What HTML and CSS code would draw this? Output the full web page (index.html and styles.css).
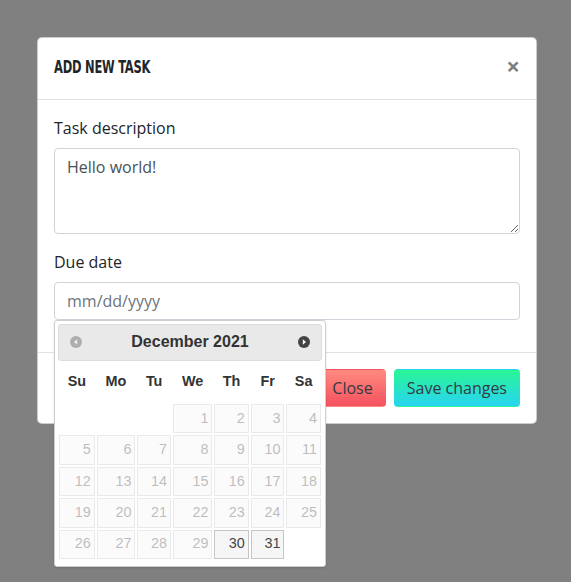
FILE: index.html
```html
<!DOCTYPE html>
<html lang="en">
<head>
<meta charset="utf-8">
<title>Add new task</title>
<link rel="stylesheet" href="styles.css">
</head>
<body>
<div class="backdrop">
  <div class="modal">
    <div class="modal-header">
      <h5 class="modal-title">Add new task</h5>
      <span class="close">&times;</span>
    </div>
    <div class="modal-body">
      <div class="form-group">
        <label class="label">Task description</label>
        <textarea class="control textarea" rows="3">Hello world!</textarea>
      </div>
      <div class="form-group">
        <label class="label">Due date</label>
        <div class="date-wrap">
          <input class="control" type="text" placeholder="mm/dd/yyyy">
          <div class="datepicker">
            <div class="dp-header">
              <span class="dp-nav dp-prev disabled">
                <svg width="12" height="12" viewBox="0 0 12 12"><circle cx="6" cy="6" r="6" fill="#444"/><path d="M7.2 3.2 L4 6 L7.2 8.8 Z" fill="#fff"/></svg>
              </span>
              <div class="dp-title">December 2021</div>
              <span class="dp-nav dp-next">
                <svg width="12" height="12" viewBox="0 0 12 12"><circle cx="6" cy="6" r="6" fill="#444"/><path d="M4.8 3.2 L8 6 L4.8 8.8 Z" fill="#fff"/></svg>
              </span>
            </div>
            <table class="dp-table">
              <thead>
                <tr><th>Su</th><th>Mo</th><th>Tu</th><th>We</th><th>Th</th><th>Fr</th><th>Sa</th></tr>
              </thead>
              <tbody>
                <tr><td class="empty">&nbsp;</td><td class="empty">&nbsp;</td><td class="empty">&nbsp;</td><td class="off"><span class="day">1</span></td><td class="off"><span class="day">2</span></td><td class="off"><span class="day">3</span></td><td class="off"><span class="day">4</span></td></tr>
                <tr><td class="off"><span class="day">5</span></td><td class="off"><span class="day">6</span></td><td class="off"><span class="day">7</span></td><td class="off"><span class="day">8</span></td><td class="off"><span class="day">9</span></td><td class="off"><span class="day">10</span></td><td class="off"><span class="day">11</span></td></tr>
                <tr><td class="off"><span class="day">12</span></td><td class="off"><span class="day">13</span></td><td class="off"><span class="day">14</span></td><td class="off"><span class="day">15</span></td><td class="off"><span class="day">16</span></td><td class="off"><span class="day">17</span></td><td class="off"><span class="day">18</span></td></tr>
                <tr><td class="off"><span class="day">19</span></td><td class="off"><span class="day">20</span></td><td class="off"><span class="day">21</span></td><td class="off"><span class="day">22</span></td><td class="off"><span class="day">23</span></td><td class="off"><span class="day">24</span></td><td class="off"><span class="day">25</span></td></tr>
                <tr><td class="off"><span class="day">26</span></td><td class="off"><span class="day">27</span></td><td class="off"><span class="day">28</span></td><td class="off"><span class="day">29</span></td><td><span class="day">30</span></td><td><span class="day">31</span></td><td class="empty">&nbsp;</td></tr>
              </tbody>
            </table>
          </div>
        </div>
      </div>
    </div>
    <div class="modal-footer">
      <button class="btn btn-close">Close</button>
      <button class="btn btn-save">Save changes</button>
    </div>
  </div>
</div>
</body>
</html>
```
FILE: styles.css
```css
* { box-sizing: border-box; }
html, body { margin: 0; padding: 0; min-height: 100%; }
html { height: 100%; }
body {
  background: #808080;
  font-family: "Open Sans", "Noto Sans", sans-serif;
  font-size: 16px;
  line-height: 1.5;
  color: #212529;
}
.backdrop {
  min-height: 582px;
  padding: 37px 0 0 37px;
}
.modal {
  width: 500px;
  background: #fff;
  border: 1px solid rgba(0,0,0,.2);
  border-radius: 5px;
}
.modal-header {
  display: flex;
  align-items: flex-start;
  padding: 16px 16px 19px;
  border-bottom: 1px solid #dee2e6;
}
.modal-title {
  margin: 0;
  font-family: "DejaVu Sans Condensed", "DejaVu Sans", sans-serif;
  font-weight: 700;
  font-size: 17px;
  line-height: 26px;
  letter-spacing: -0.3px;
  text-transform: uppercase;
  color: #212529;
  transform: scaleX(0.75);
  transform-origin: left center;
}
.close {
  margin: -16px -16px -16px auto;
  padding: 16px;
  font-size: 24px;
  font-weight: 700;
  line-height: 1;
  color: #000;
  opacity: .5;
}
.modal-body {
  padding: 16px;
}
.form-group {
  margin-bottom: 16px;
}
.label {
  display: block;
  margin-bottom: 8px;
}
.control {
  display: block;
  width: 100%;
  height: 38px;
  padding: 6px 12px;
  font-family: inherit;
  font-size: 16px;
  line-height: 1.5;
  color: #495057;
  background: #fff;
  border: 1px solid #ced4da;
  border-radius: 4px;
  margin: 0;
}
.control::placeholder { color: #6c757d; }
.textarea {
  height: 86px;
  resize: vertical;
}
.date-wrap {
  position: relative;
}
.datepicker {
  position: absolute;
  left: 0;
  top: 100%;
  z-index: 10;
  width: 272px;
  padding: 3.2px 3.2px 0;
  background: #fff;
  border: 1px solid #cfcfcf;
  border-radius: 3px;
  box-shadow: 0 1px 2px rgba(0,0,0,.15);
  font-family: "Liberation Sans", Arial, sans-serif;
  color: #333;
}
.dp-header {
  position: relative;
  padding: 3.2px 0;
  background: #e9e9e9;
  border: 1px solid #dddddd;
  border-radius: 3px;
  font-weight: 700;
}
.dp-title {
  margin: 0 36.8px;
  line-height: 28.8px;
  text-align: center;
  font-size: 16px;
}
.dp-nav {
  position: absolute;
  top: 2px;
  width: 28.8px;
  height: 28.8px;
  display: flex;
  align-items: center;
  justify-content: center;
}
.dp-nav svg { display: block; }
.dp-prev { left: 2px; }
.dp-next { right: 2px; }
.dp-nav.disabled { opacity: .35; }
.dp-table {
  width: 100%;
  border-collapse: collapse;
  font-size: 14.4px;
  margin: 0 0 5.76px;
}
.dp-table th {
  padding: 10.08px 4.32px;
  text-align: center;
  font-weight: 700;
  border: 0;
  color: #333;
}
.dp-table td {
  padding: 1px;
  border: 0;
}
.dp-table td.off { opacity: .35; }
.day {
  display: block;
  padding: 2.88px;
  text-align: right;
  border: 1px solid #c5c5c5;
  background: #f6f6f6;
  color: #454545;
  font-weight: 400;
}
.modal-footer {
  display: flex;
  justify-content: flex-end;
  align-items: center;
  padding: 12px;
  border-top: 1px solid #dee2e6;
}
.btn {
  margin: 4px;
  padding: 6px 12px;
  font-family: inherit;
  font-size: 16px;
  line-height: 1.5;
  border: 1px solid transparent;
  border-radius: 4px;
  color: #343a40;
}
.btn-close {
  background: linear-gradient(#ff8a80, #f5515f);
}
.btn-save {
  background: linear-gradient(#2af695, #27d4f2);
}
```
